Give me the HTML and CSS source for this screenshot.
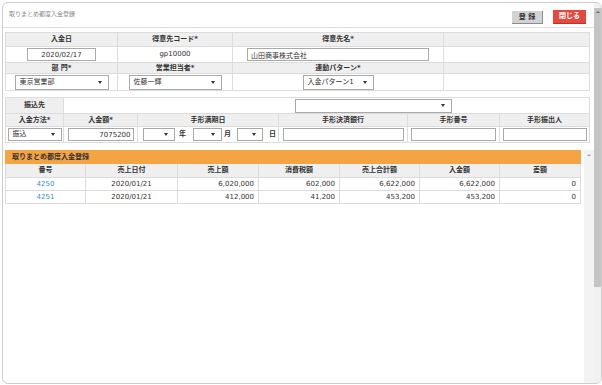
FILE: index.html
```html
<!DOCTYPE html>
<html lang="ja">
<head>
<meta charset="utf-8">
<title>取りまとめ都度入金登録</title>
<link rel="stylesheet" href="styles.css">
</head>
<body>
<div class="panel">
  <div class="main">
    <div class="head">
      <span class="title">取りまとめ都度入金登録</span>
      <div class="actions">
        <button class="btn btn-save">登 録</button>
        <button class="btn btn-close">閉じる</button>
      </div>
    </div>

    <div class="form form1">
      <div class="th">入金日</div>
      <div class="th">得意先コード*</div>
      <div class="th">得意先名*</div>
      <div class="th"></div>

      <div class="td"><input class="inp inp-date" value="2020/02/17"></div>
      <div class="td">gp10000</div>
      <div class="td"><input class="inp inp-name" value="山田商事株式会社"></div>
      <div class="td"></div>

      <div class="th">部 門*</div>
      <div class="th">営業担当者*</div>
      <div class="th">連動パターン*</div>
      <div class="th"></div>

      <div class="td"><div class="sel sel-tall w-dept"><span>東京営業部</span><i class="caret"></i></div></div>
      <div class="td"><div class="sel sel-tall w-staff"><span>佐藤一輝</span><i class="caret"></i></div></div>
      <div class="td"><div class="sel sel-tall w-pattern"><span>入金パターン1</span><i class="caret"></i></div></div>
      <div class="td"></div>
    </div>

    <div class="form form2">
      <div class="th">振込先</div>
      <div class="td td-bank"><div class="sel w-dest"><span></span><i class="caret"></i></div></div>

      <div class="th">入金方法*</div>
      <div class="th">入金額*</div>
      <div class="th">手形満期日</div>
      <div class="th">手形決済銀行</div>
      <div class="th">手形番号</div>
      <div class="th">手形振出人</div>

      <div class="td"><div class="sel w-method"><span>振込</span><i class="caret"></i></div></div>
      <div class="td"><input class="inp inp-amt" value="7075200"></div>
      <div class="td td-date">
        <div class="sel w-y"><span></span><i class="caret"></i></div><span class="unit u-y">年</span>
        <div class="sel w-m"><span></span><i class="caret"></i></div><span class="unit u-m">月</span>
        <div class="sel w-d"><span></span><i class="caret"></i></div><span class="unit u-d">日</span>
      </div>
      <div class="td"><input class="inp inp-bank" value=""></div>
      <div class="td"><input class="inp inp-no" value=""></div>
      <div class="td"><input class="inp inp-drawer" value=""></div>
    </div>

    <div class="list">
      <div class="list-body">
        <div class="bar">取りまとめ都度入金登録</div>
        <div class="grid">
          <div class="gh">番号</div>
          <div class="gh">売上日付</div>
          <div class="gh">売上額</div>
          <div class="gh">消費税額</div>
          <div class="gh">売上合計額</div>
          <div class="gh">入金額</div>
          <div class="gh">差額</div>

          <div class="gd c"><a class="link" href="#">4250</a></div>
          <div class="gd c">2020/01/21</div>
          <div class="gd r">6,020,000</div>
          <div class="gd r">602,000</div>
          <div class="gd r">6,622,000</div>
          <div class="gd r">6,622,000</div>
          <div class="gd r">0</div>

          <div class="gd c"><a class="link" href="#">4251</a></div>
          <div class="gd c">2020/01/21</div>
          <div class="gd r">412,000</div>
          <div class="gd r">41,200</div>
          <div class="gd r">453,200</div>
          <div class="gd r">453,200</div>
          <div class="gd r">0</div>
        </div>
      </div>
      <div class="iscroll"><i class="up up-light"></i></div>
    </div>
  </div>
  <div class="oscroll">
    <div class="othumb"><i class="up"></i></div>
  </div>
</div>
</body>
</html>
```

FILE: styles.css
```css
* { box-sizing: border-box; }
html, body { margin: 0; padding: 0; background: #fff; }
body {
  font-family: "DejaVu Sans", "Noto Sans CJK JP", sans-serif;
  font-size: 7px;
  line-height: 1;
  color: #333;
}

.panel {
  margin: 2px 0 0 2px;
  width: 600px;
  height: 382px;
  border: 1px solid #cdcdcd;
  border-radius: 6px;
  display: flex;
  overflow: hidden;
}
.main { flex: 1; min-width: 0; display: flex; flex-direction: column; }

/* header */
.head {
  height: 25px;
  flex: none;
  border-bottom: 1px solid #dedede;
  display: flex;
  align-items: flex-start;
  justify-content: space-between;
  padding: 0 8px 0 6px;
}
.title { margin-top: 8px; font-size: 6px; color: #8a8a8a; }
.actions { display: flex; align-items: flex-start; margin-top: 7px; }
.btn {
  font-family: "DejaVu Sans", "Noto Sans CJK JP", sans-serif;
  font-size: 7px;
  font-weight: bold;
  line-height: 1;
  padding: 0;
  border: 0;
  cursor: pointer;
}
.btn-save {
  width: 31px; height: 13px; margin: 1px 10px 0 0;
  background: #d2d2d2; color: #333;
  border-right: 1px solid #8c8c8c; border-bottom: 1px solid #8c8c8c;
}
.btn-close {
  width: 33px; height: 14px;
  background: #e4493f; color: #fff;
  border-bottom: 1px solid #b3362e;
}

/* form tables */
.form {
  flex: none;
  margin-left: 2px;
  width: 585px;
  display: grid;
  gap: 1px;
  padding: 1px;
  background: #dcdcdc;
}
.form1 {
  margin-top: 4px;
  grid-template-columns: 111px 114px 210px 145px;
  grid-template-rows: 13px 15px 10px 16px;
}
.form2 {
  margin-top: 6px;
  grid-template-columns: 57px 73px 140px 128px 91px 89px;
  grid-template-rows: 15px 12px 15px;
}
.th {
  background: #efefef;
  font-weight: bold;
  color: #333;
  display: flex; align-items: center; justify-content: center;
}
.td {
  background: #fff;
  display: flex; align-items: center; justify-content: center;
}
.td-bank { grid-column: span 5; justify-content: flex-start; padding-left: 231px; }
.td-date { justify-content: flex-start; padding-left: 5px; }

.inp {
  height: 13px;
  border: 1px solid #a9a9a9;
  background: #fff;
  font: inherit;
  color: #333;
  padding: 0 3px;
  outline: none;
}
.inp-date { width: 69px; text-align: center; }
.inp-name { width: 182px; }
.inp-amt { width: 66px; text-align: right; padding-right: 2px; }
.inp-bank { width: 121px; }
.inp-no { width: 85px; }
.inp-drawer { width: 84px; }

.sel {
  height: 13px;
  border: 1px solid #a9a9a9;
  background: #fff;
  display: flex; align-items: center; justify-content: space-between;
  padding: 0 6px 0 4px;
  flex: none;
}
.sel-tall { height: 15px; }
.caret {
  width: 0; height: 0;
  border-left: 2px solid transparent;
  border-right: 2px solid transparent;
  border-top: 3px solid #333;
}
.w-dept { width: 94px; }
.w-staff { width: 93px; }
.w-pattern { width: 71px; }
.w-dest { width: 157px; height: 14px; }
.w-method { width: 54px; }
.w-y { width: 32px; }
.w-m { width: 29px; }
.w-d { width: 26px; }
.unit { font-weight: bold; }
.u-y { margin: 0 7px 0 4px; }
.u-m { margin: 0 6px 0 2px; }
.u-d { margin-left: 6px; }

/* list */
.list { flex: 1; display: flex; margin-top: 7px; min-height: 0; }
.list-body { flex: 1; padding-left: 2px; }
.bar {
  width: 576px; height: 14px;
  background: #f5a443;
  font-weight: bold;
  color: #333;
  padding-left: 7px;
  display: flex; align-items: center;
}
.grid {
  width: 576px;
  display: grid;
  grid-template-columns: 79px 91px 80px 80px 79px 79px 80px;
  grid-template-rows: 13px 12px 12px;
  gap: 1px;
  padding: 0 1px 1px 1px;
  background: #dcdcdc;
}
.gh {
  background: #efefef;
  font-weight: bold;
  display: flex; align-items: center; justify-content: center;
}
.gd {
  background: #fff;
  display: flex; align-items: center;
  padding: 0 4px;
}
.gd.c { justify-content: center; }
.gd.r { justify-content: flex-end; }
.link { color: #3b8fcc; text-decoration: none; }

.iscroll {
  width: 10px; flex: none;
  background: #f3f3f3;
  display: flex; justify-content: center;
  padding-top: 4px;
}
.up {
  display: block;
  width: 0; height: 0;
  border-left: 2px solid transparent;
  border-right: 2px solid transparent;
  border-bottom: 2px solid #666;
}
.up-light { border-bottom-color: #a8a8a8; }

.oscroll {
  width: 7px; flex: none;
  background: #f1f1f1;
  padding-top: 5px;
}
.othumb {
  height: 279px;
  background: #c4c4c4;
  display: flex; justify-content: center;
  padding-top: 3px;
}
```
